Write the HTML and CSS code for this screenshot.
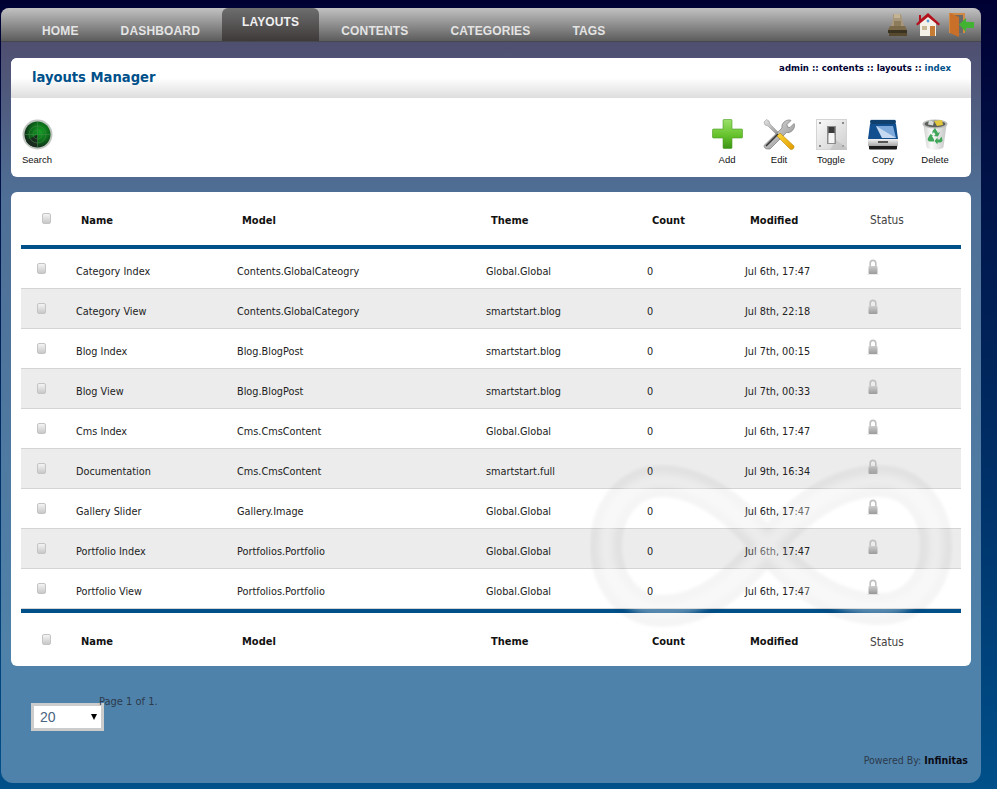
FILE: index.html
```html
<!DOCTYPE html>
<html lang="en">
<head>
  <meta charset="UTF-8">
  <title>layouts Manager</title>
  <link rel="stylesheet" href="styles.css">
</head>
<body>
  <svg class="defs" width="0" height="0">
    <defs>
      <linearGradient id="g-plus" x1="0" y1="0" x2="0" y2="1">
        <stop offset="0" stop-color="#9be06a"/><stop offset=".55" stop-color="#66c22c"/><stop offset="1" stop-color="#3c9415"/>
      </linearGradient>
      <linearGradient id="g-yellow" x1="0" y1="0" x2="1" y2="1">
        <stop offset="0" stop-color="#ffd83a"/><stop offset="1" stop-color="#e09a00"/>
      </linearGradient>
      <linearGradient id="g-steel" x1="0" y1="0" x2="1" y2="1">
        <stop offset="0" stop-color="#e4e4e4"/><stop offset="1" stop-color="#8c8c8c"/>
      </linearGradient>
      <linearGradient id="g-plate" x1="0" y1="0" x2="1" y2="1">
        <stop offset="0" stop-color="#fafafa"/><stop offset="1" stop-color="#cfcfcf"/>
      </linearGradient>
      <linearGradient id="g-bin" x1="0" y1="0" x2="1" y2="0">
        <stop offset="0" stop-color="#cfd2cf"/><stop offset=".35" stop-color="#fbfbfb"/><stop offset="1" stop-color="#c4c6c4"/>
      </linearGradient>
      <linearGradient id="g-scan" x1="0" y1="0" x2="0" y2="1">
        <stop offset="0" stop-color="#f4f4f4"/><stop offset="1" stop-color="#9c9c9c"/>
      </linearGradient>
      <radialGradient id="g-radar" cx=".6" cy=".4" r=".6">
        <stop offset="0" stop-color="#12a020"/><stop offset=".6" stop-color="#0d6a1a"/><stop offset="1" stop-color="#0f2c18"/>
      </radialGradient>
      <linearGradient id="g-lock" x1="0" y1="0" x2="0" y2="1">
        <stop offset="0" stop-color="#cdcdcd"/><stop offset="1" stop-color="#9b9b9b"/>
      </linearGradient>
    </defs>
    <symbol id="lock" viewBox="0 0 12 16">
      <path d="M3.2 8V4.2a2.8 2.8 0 0 1 5.6 0V8" fill="none" stroke="#c0c0c0" stroke-width="1.6"/>
      <rect x="1.5" y="7" width="9" height="8" rx="1" fill="url(#g-lock)"/>
      <rect x="0" y="15" width="12" height="1" fill="#ececec"/>
    </symbol>
  </svg>
  <div class="wrapper">
    <nav class="topnav">
      <ul class="menu">
        <li><a href="#">Home</a></li>
        <li><a href="#">Dashboard</a></li>
        <li class="active"><a href="#">Layouts</a></li>
        <li><a href="#">Contents</a></li>
        <li><a href="#">Categories</a></li>
        <li><a href="#">Tags</a></li>
      </ul>
      <div class="quick-icons">
        <svg width="19" height="24" viewBox="0 0 19 24">
          <path d="M5 1h8l1 5 2 7H3l2-7z" fill="#a8977a"/>
          <path d="M6 1h6v4H6z" fill="#c2b394"/>
          <path d="M6 8h7v5H6z" fill="#8c7c5c"/>
          <path d="M2 13h15l2 4H0z" fill="#7a6a4a"/>
          <path d="M0 17h19v3H0z" fill="#3a3322"/>
          <path d="M1 20h18v3H1z" fill="#57492e"/>
        </svg>
        <svg width="24" height="23" viewBox="0 0 24 23">
          <path d="M4 9l8-6 8 6v14H4z" fill="#f4f1e8"/>
          <path d="M12 0L5 6V2H3v6L0 11l1.500 1.500L12 4l10.500 8.500L24 11z" fill="#b3121c"/>
          <circle cx="12" cy="8" r="1.400" fill="#5aa0d8"/>
          <rect x="14" y="13" width="5" height="10" fill="#c67c34"/>
          <rect x="6" y="13" width="5" height="4" fill="#c8b894"/>
        </svg>
        <svg width="25" height="24" viewBox="0 0 25 24">
          <path d="M0 0h16v20H0z" fill="#6a6a68"/>
          <path d="M0 0h16v2H2v18H0z" fill="#d08a46"/>
          <path d="M14 1h2v19h-2z" fill="#d08a46"/>
          <path d="M1 0l9 4v20l-9-4z" fill="#c8702a"/>
          <path d="M10 11.500L17 5v4h8v6h-8v4z" fill="#42b233"/>
        </svg>
      </div>
    </nav>

    <section class="panel">
      <div class="panel-head">
        <h1 class="panel-title">layouts Manager</h1>
        <div class="crumbs">admin :: contents :: layouts :: <span class="crumb-current">index</span></div>
      </div>
      <div class="toolbar">
        <a class="tool" href="#">
          <svg width="31" height="31" viewBox="0 0 31 31">
            <circle cx="15.5" cy="15.5" r="15" fill="#bfc4bf"/>
            <circle cx="15.5" cy="15.5" r="13" fill="url(#g-radar)"/>
            <path d="M15.500 15.500L4 22a13 13 0 0 0 12 6z" fill="#1a2a1e"/>
            <path d="M15.500 2.500v26M2.500 15.500h26" stroke="#3f8a4a" stroke-width=".6"/>
            <circle cx="15.5" cy="15.5" r="8.500" fill="none" stroke="#3f8a4a" stroke-width=".6"/>
            <circle cx="15.5" cy="15.5" r="4.500" fill="none" stroke="#3f8a4a" stroke-width=".6"/>
          </svg>
          <span>Search</span>
        </a>
        <div class="tool-group">
          <a class="tool" href="#">
            <svg width="31" height="31" viewBox="0 0 31 31">
              <path d="M11 1.500a1 1 0 0 1 1-1h7a1 1 0 0 1 1 1V10h9.500a1 1 0 0 1 1 1v7a1 1 0 0 1-1 1H20v9.500a1 1 0 0 1-1 1h-7a1 1 0 0 1-1-1V19H1.500a1 1 0 0 1-1-1v-7a1 1 0 0 1 1-1H11z" fill="url(#g-plus)" stroke="#4a9a22" stroke-width=".6"/>
            </svg>
            <span>Add</span>
          </a>
          <a class="tool" href="#">
            <svg width="32" height="31" viewBox="0 0 32 31">
              <path d="M1 3l2.500-2.500L6 2l1 3 10 10-2 2L5 7 2 6z" fill="url(#g-steel)" stroke="#777" stroke-width=".4"/>
              <path d="M4.500 30c-2 0-3.500-1.500-3.500-3.500L19 9c-1-4 3-8.500 8-8l1 .5-4 4 .5 2.500 2.500.5 4-4 .5 1c.5 5-4 9-8 8L7 30z" fill="url(#g-steel)" stroke="#6c6c6c" stroke-width=".6"/>
              <path d="M3 27L15 15" stroke="#333" stroke-width="1.600"/>
              <path d="M14 17l3-3 14 13c.5 2-1.500 4-3.500 3.500z" fill="url(#g-yellow)" stroke="#a87a00" stroke-width=".5"/>
            </svg>
            <span>Edit</span>
          </a>
          <a class="tool" href="#">
            <svg width="31" height="31" viewBox="0 0 31 31">
              <rect x=".5" y=".5" width="30" height="30" fill="url(#g-plate)" stroke="#d4d4d4"/>
              <path d="M3 3h2v2H3zM26 3h2v2h-2zM3 26h2v2H3zM26 26h2v2h-2z" fill="#8a8a8a"/>
              <path d="M20 21l11 8v2H14z" fill="#bdbdbd" opacity=".6"/>
              <rect x="11" y="7" width="9" height="18" fill="#8c8c8c"/>
              <rect x="12.500" y="8" width="6" height="8" fill="#3a3a3a"/>
              <path d="M12.500 14h6v10h-6z" fill="#f6f6f6"/>
            </svg>
            <span>Toggle</span>
          </a>
          <a class="tool" href="#">
            <svg width="30" height="31" viewBox="0 0 30 31">
              <path d="M3 0h24l1 5H2z" fill="#d8e4f0"/>
              <path d="M2 2l1-1h24l1 1-.5 3H2.500z" fill="#10406e"/>
              <path d="M2 5h26l2 15H0z" fill="#114f8f"/>
              <path d="M8 7h17l3 12H14z" fill="#7ea9db"/>
              <path d="M8 7l6 12h14z" fill="#e4eefa" opacity=".7"/>
              <path d="M0 20h30v6a2 2 0 0 1-2 2H2a2 2 0 0 1-2-2z" fill="url(#g-scan)"/>
              <path d="M1 27h28v2.500a1 1 0 0 1-1 1H2a1 1 0 0 1-1-1z" fill="#1b1b1b"/>
              <rect x="10" y="22" width="10" height="2" fill="#555"/>
            </svg>
            <span>Copy</span>
          </a>
          <a class="tool" href="#">
            <svg width="26" height="31" viewBox="0 0 26 31">
              <path d="M1.500 6l3 22c1 3.500 16 3.500 17 0l3-22z" fill="url(#g-bin)"/>
              <ellipse cx="13" cy="5" rx="12.500" ry="4.500" fill="#b9bcb9"/>
              <ellipse cx="13" cy="5" rx="10.500" ry="3.200" fill="#5c5f5c"/>
              <path d="M12 2l8-1 1 5-6 1z" fill="#e2c73c"/>
              <path d="M7 1.500l5 1-1 4-5-1z" fill="#d8dcd8"/>
              <path d="M10.500 12l2.500-3 3 5 2-1-2 4.500-4.500-.5 2-1-1.500-3-1.500 2zM8.500 15l2.500 1.500-1 .5 2 3.500v2H8c-2 0-3-2-2-3.500zM19.500 17.500l1 3.500c0 1.500-1 2.500-2.500 2.500h-2.500v2L12.500 22l3-3.500v2h2z" fill="#3fa65a"/>
            </svg>
            <span>Delete</span>
          </a>
        </div>
      </div>
    </section>

    <section class="grid-card">
      <table class="grid">
        <colgroup>
          <col class="c-check"><col class="c-name"><col class="c-model"><col class="c-theme"><col class="c-count"><col class="c-mod"><col class="c-status">
        </colgroup>
        <thead>
          <tr>
            <th><i class="check"></i></th><th>Name</th><th>Model</th><th>Theme</th><th>Count</th><th>Modified</th><th class="status-head">Status</th>
          </tr>
        </thead>
        <tbody>
          <tr><td><i class="check"></i></td><td>Category Index</td><td>Contents.GlobalCateogry</td><td>Global.Global</td><td>0</td><td>Jul 6th, 17:47</td><td><svg class="lock"><use href="#lock"/></svg></td></tr>
          <tr><td><i class="check"></i></td><td>Category View</td><td>Contents.GlobalCategory</td><td>smartstart.blog</td><td>0</td><td>Jul 8th, 22:18</td><td><svg class="lock"><use href="#lock"/></svg></td></tr>
          <tr><td><i class="check"></i></td><td>Blog Index</td><td>Blog.BlogPost</td><td>smartstart.blog</td><td>0</td><td>Jul 7th, 00:15</td><td><svg class="lock"><use href="#lock"/></svg></td></tr>
          <tr><td><i class="check"></i></td><td>Blog View</td><td>Blog.BlogPost</td><td>smartstart.blog</td><td>0</td><td>Jul 7th, 00:33</td><td><svg class="lock"><use href="#lock"/></svg></td></tr>
          <tr><td><i class="check"></i></td><td>Cms Index</td><td>Cms.CmsContent</td><td>Global.Global</td><td>0</td><td>Jul 6th, 17:47</td><td><svg class="lock"><use href="#lock"/></svg></td></tr>
          <tr><td><i class="check"></i></td><td>Documentation</td><td>Cms.CmsContent</td><td>smartstart.full</td><td>0</td><td>Jul 9th, 16:34</td><td><svg class="lock"><use href="#lock"/></svg></td></tr>
          <tr><td><i class="check"></i></td><td>Gallery Slider</td><td>Gallery.Image</td><td>Global.Global</td><td>0</td><td>Jul 6th, 17:47</td><td><svg class="lock"><use href="#lock"/></svg></td></tr>
          <tr><td><i class="check"></i></td><td>Portfolio Index</td><td>Portfolios.Portfolio</td><td>Global.Global</td><td>0</td><td>Jul 6th, 17:47</td><td><svg class="lock"><use href="#lock"/></svg></td></tr>
          <tr><td><i class="check"></i></td><td>Portfolio View</td><td>Portfolios.Portfolio</td><td>Global.Global</td><td>0</td><td>Jul 6th, 17:47</td><td><svg class="lock"><use href="#lock"/></svg></td></tr>
        </tbody>
        <tfoot>
          <tr>
            <th><i class="check"></i></th><th>Name</th><th>Model</th><th>Theme</th><th>Count</th><th>Modified</th><th class="status-head">Status</th>
          </tr>
        </tfoot>
      </table>
      <!-- watermark sits over the rows -->
      <svg class="watermark" width="366" height="166" viewBox="0 0 366 166">
        <path class="inf-ring" d="M177 83C145 45 110 18 72 18C38 18 16 48 16 83s22 65 56 65c40 0 73-27 105-65c33-38 70-65 112-65c35 0 57 30 57 65s-22 63-57 63c-42 0-79-25-112-63z"/>
        <path class="inf-shine" d="M177 83C145 45 110 18 72 18C38 18 16 48 16 83s22 65 56 65c40 0 73-27 105-65c33-38 70-65 112-65c35 0 57 30 57 65s-22 63-57 63c-42 0-79-25-112-63z"/>
      </svg>
    </section>

    <div class="pager">
      <div class="size-box">
        <select class="page-size">
          <option>20</option>
          <option>50</option>
        </select>
      </div>
      <span class="page-count">Page 1 of 1.</span>
    </div>
    <div class="powered">Powered By: <b>Infinitas</b></div>
  </div>
</body>
</html>
```

FILE: styles.css
```css
* {
  box-sizing: border-box;
}
html {
  height: 100%;
}
body {
  margin: 0;
  height: 789px;
  overflow: hidden;
  padding: 8px 16px 6px 1px;
  background: linear-gradient(to bottom, #000033 0, #00508a 100%);
  font-family: "DejaVu Sans", sans-serif;
  font-stretch: condensed;
  font-size: 10px;
  color: #222;
}
a {
  text-decoration: none;
  color: inherit;
}
.defs {
  position: absolute;
}
.wrapper {
  height: 775px;
  border-radius: 8px 8px 12px 12px;
  background: linear-gradient(to bottom, #4f4f70 34px, #4f6f96 190px, #4f82aa 660px);
  position: relative;
}

/* top nav */
.topnav {
  height: 34px;
  display: flex;
  justify-content: space-between;
  border-radius: 8px 8px 0 0;
  border-bottom: 1px solid #46464f;
  background: linear-gradient(to bottom, #c2c2c2, #5c5c5c);
}
.menu {
  list-style: none;
  margin: 0;
  padding: 0 0 0 20px;
  display: flex;
}
.menu a {
  display: block;
  height: 33px;
  padding: 16px 21px 0;
  font-family: "Liberation Sans", Arial, sans-serif;
  font-stretch: normal;
  font-size: 12px;
  letter-spacing: .15px;
  line-height: 15px;
  font-weight: bold;
  text-transform: uppercase;
  color: #e4e4e4;
}
.menu .active a {
  padding: 7px 20px 0;
  margin: 0 1px;
  border-radius: 6px 6px 0 0;
  color: #f0f0f0;
  background: linear-gradient(to bottom, #6e6e6e, #3f3a3a);
}
.quick-icons {
  display: flex;
  align-items: center;
  gap: 9px;
  padding-right: 7px;
}

/* manager panel */
.panel {
  margin: 16px 10px 0;
  border-radius: 6px;
  overflow: hidden;
  background: #fff;
}
.panel-head {
  height: 40px;
  padding: 9px 20px 0 21px;
  display: flex;
  justify-content: space-between;
  align-items: flex-start;
  background: linear-gradient(to bottom, #fff 50%, #ddd 100%);
}
.panel-title {
  margin: 0;
  font-size: 14.6px;
  line-height: 20px;
  font-weight: bold;
  color: #00508a;
}
.crumbs {
  margin-top: -5px;
  font-size: 9.5px;
  line-height: 12px;
  font-weight: bold;
  color: #000033;
}
.crumb-current {
  color: #00508a;
}
.toolbar {
  height: 79px;
  padding: 21px 10px 0 0;
  display: flex;
  justify-content: space-between;
}
.tool {
  width: 52px;
  display: flex;
  flex-direction: column;
  align-items: center;
  height: 52px;
  color: #111;
}
.tool svg {
  height: 31px;
  display: block;
}
.tool span {
  margin-top: 4px;
  font-family: "Liberation Sans", Arial, sans-serif;
  font-stretch: normal;
  font-size: 9.5px;
  line-height: 12px;
}
.tool-group {
  display: flex;
}

/* table card */
.grid-card {
  position: relative;
  margin: 15px 10px 0;
  height: 474px;
  padding: 0 10px;
  border-radius: 6px;
  background: #fff;
}
.grid {
  width: 940px;
  table-layout: fixed;
  border-collapse: separate;
  border-spacing: 0;
}
.c-check { width: 50px; }
.c-name { width: 161px; }
.c-model { width: 249px; }
.c-theme { width: 161px; }
.c-count { width: 98px; }
.c-mod { width: 120px; }
.c-status { width: 101px; }
.grid th {
  height: 57px;
  padding: 3px 0 0 10px;
  text-align: left;
  font-size: 11px;
  font-weight: bold;
  color: #111;
}
.grid th:first-child {
  padding: 0 0 0 21px;
}
.grid .status-head {
  font-size: 11.8px;
  font-weight: normal;
  color: #444;
}
.grid thead th {
  border-bottom: 4px solid #00508a;
}
.grid tfoot th {
  border-top: 4px solid #00508a;
  padding-top: 4px;
}
.grid tfoot th:first-child {
  padding-top: 0;
}
.grid td {
  height: 40px;
  padding: 6px 0 0 5px;
  border-bottom: 1px solid #d4d4d4;
  font-size: 10.8px;
  color: #222;
  white-space: nowrap;
}
.grid td:first-child {
  padding: 0 0 0 16px;
}
.grid tbody tr:nth-child(even) td {
  background: #ececec;
}
.check {
  display: block;
  width: 9px;
  height: 11px;
  border: 1px solid #c4c4c4;
  border-radius: 2px;
  background: linear-gradient(to bottom, #f4f4f4, #c8c8c8);
}
.lock {
  display: block;
  width: 12px;
  height: 16px;
  margin: -10px 0 0 2px;
}
.watermark {
  position: absolute;
  left: 579px;
  top: 271px;
  pointer-events: none;
}
.inf-ring {
  fill: none;
  stroke: #000;
  stroke-opacity: .04;
  stroke-width: 32px;
  filter: blur(1.5px);
}
.inf-shine {
  fill: none;
  stroke: #fff;
  stroke-opacity: .35;
  stroke-width: 14px;
  filter: blur(3px);
}

/* pager and footer */
.pager {
  position: relative;
  padding: 37px 0 0 30px;
}
.size-box {
  position: relative;
  width: 73px;
  height: 28px;
}
.size-box::after {
  content: "";
  position: absolute;
  right: 7px;
  top: 11px;
  border-left: 3px solid transparent;
  border-right: 3px solid transparent;
  border-top: 6px solid #000;
  pointer-events: none;
}
.page-size {
  display: block;
  width: 100%;
  height: 100%;
  padding: 0 0 0 6px;
  appearance: none;
  border: 3px solid #ccc;
  border-radius: 0;
  background: #fff;
  font-family: "Liberation Sans", Arial, sans-serif;
  font-stretch: normal;
  font-size: 14px;
  color: #4a6480;
}
.page-count {
  position: absolute;
  left: 98px;
  top: 29px;
  font-size: 11px;
  line-height: 13px;
  color: #2c3a4c;
}
.powered {
  position: absolute;
  right: 13px;
  bottom: 16px;
  font-size: 10.5px;
  line-height: 14px;
  color: #2c3a4c;
}
.powered b {
  font-weight: bold;
  color: #0a0a14;
}
```
